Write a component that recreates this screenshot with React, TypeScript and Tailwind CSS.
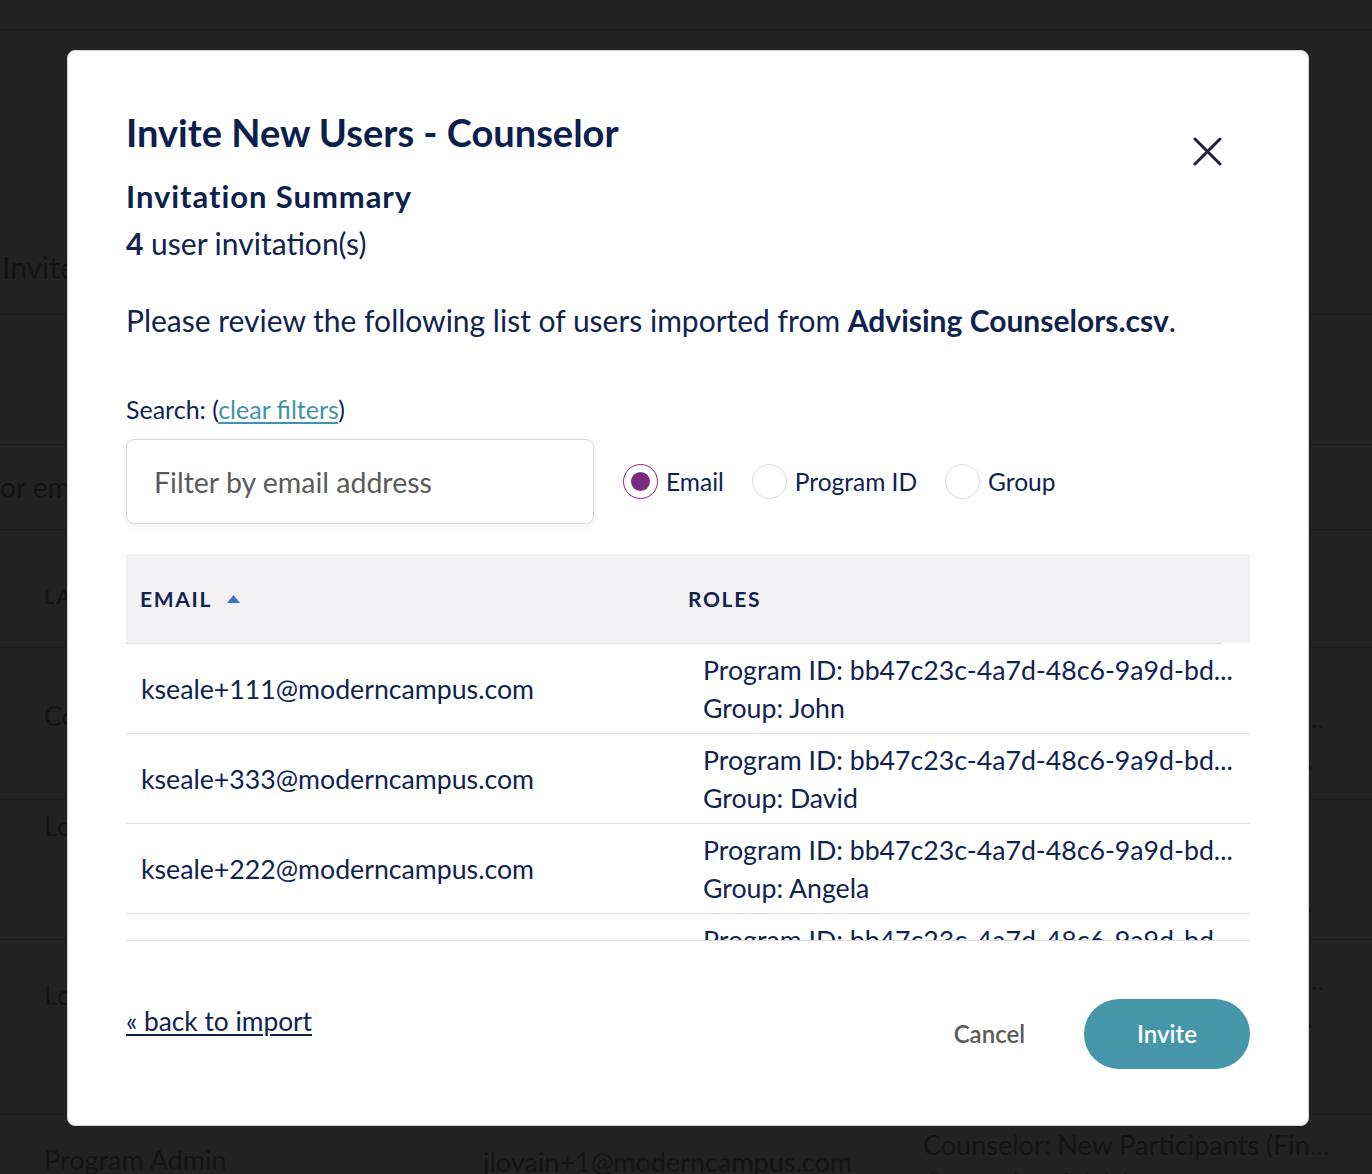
import { useState } from "react";

type Invitee = {
  email: string;
  programId: string;
  group: string;
};

const INVITEES: Invitee[] = [
  { email: "kseale+111@moderncampus.com", programId: "bb47c23c-4a7d-48c6-9a9d-bd...", group: "John" },
  { email: "kseale+333@moderncampus.com", programId: "bb47c23c-4a7d-48c6-9a9d-bd...", group: "David" },
  { email: "kseale+222@moderncampus.com", programId: "bb47c23c-4a7d-48c6-9a9d-bd...", group: "Angela" },
  { email: "kseale+444@moderncampus.com", programId: "bb47c23c-4a7d-48c6-9a9d-bd...", group: "Maria" },
];

const FILTERS = ["Email", "Program ID", "Group"] as const;

const LONG_ROLE = "Counselor: Advising Participants (Fall 2024 Cohort)";

// Page behind the dimmed overlay, barely visible
const BackdropPage = () => (
  <div className="text-[27px] leading-[42px] text-[#141414]">
    <div className="h-[30px] border-b border-[#1c1c1c]" />
    <div className="flex h-[285px] items-end border-b border-[#1c1c1c] pb-[26px] pl-[2px] text-[30px]">
      Invite Users
    </div>
    <div className="h-[130px] border-b border-[#1c1c1c]" />
    <div className="flex h-[85px] items-center border-b border-[#1c1c1c] text-[28px]">or email</div>
    <div className="flex h-[118px] items-end border-b border-[#1c1c1c] pb-[30px] pl-[44px] text-[20px] font-bold tracking-[0.1em]">
      LAST NAME
    </div>

    <div className="flex h-[152px] border-b border-[#1c1c1c] pl-[44px]">
      <span className="w-[879px] pt-[47px]">Counselor</span>
      <div className="flex w-[407px] flex-col pt-[49px]">
        <span className="truncate">{LONG_ROLE}</span>
        <span className="w-[396px] truncate">{LONG_ROLE}</span>
      </div>
    </div>

    <div className="flex h-[140px] border-b border-[#1c1c1c] pl-[44px] leading-[38px]">
      <span className="w-[879px] pt-[7px]">Lovain</span>
      <div className="flex w-[396px] flex-col pt-[7px]">
        <span>Counselor: Advising</span>
        <span>Counselor: New Students</span>
        <span className="truncate">{LONG_ROLE}</span>
      </div>
    </div>

    <div className="flex h-[175px] border-b border-[#1c1c1c] pl-[44px] leading-[38px]">
      <span className="w-[879px] pt-[36px]">Lovain</span>
      <div className="flex w-[407px] flex-col pt-[21px]">
        <span className="truncate">{LONG_ROLE}</span>
        <span className="w-[396px] truncate">{LONG_ROLE}</span>
      </div>
    </div>

    <div className="flex pl-[44px] leading-[38px]">
      <span className="w-[439px] pt-[26px]">Program Admin</span>
      <span className="w-[440px] pt-[28px]">jlovain+1@moderncampus.com</span>
      <div className="flex flex-col whitespace-nowrap pt-[11px]">
        <span>Counselor: New Participants (Fin...</span>
        <span>Counselor: Advising</span>
      </div>
    </div>
  </div>
);

const CloseIcon = () => (
  <svg className="block" width="29" height="29" viewBox="0 0 29 29" fill="none" stroke="#1b1f3d" strokeWidth={3} strokeLinecap="round">
    <path d="M2 2l25 25M27 2L2 27" />
  </svg>
);

const App = () => {
  const [filter, setFilter] = useState<(typeof FILTERS)[number]>("Email");

  return (
    <div className="relative h-[1174px] w-full overflow-hidden bg-[#222222] font-['Lato',sans-serif]">
      <BackdropPage />

      {/* Modal */}
      <div className="absolute inset-0">
        <div className="relative ml-[67px] mt-[50px] h-[1076px] w-[1242px] rounded-[8px] border border-[#d2d2d2] bg-white px-[58px] pt-[59px] text-[#10234f]">

          <button type="button" className="absolute right-[86px] top-[86px]">
            <CloseIcon />
          </button>

          {/* Header */}
          <h1 className="text-[38px] font-bold leading-[44px] text-[#0c1f4d]">Invite New Users - Counselor</h1>
          <h2 className="mt-[25px] text-[31px] font-bold leading-[34px] tracking-[0.03em] text-[#0c1f4d]">
            Invitation Summary
          </h2>
          <p className="mt-[12px] text-[30px] leading-[36px]">
            <span className="font-bold">4</span> user invitation(s)
          </p>

          <p className="mt-[42px] text-[30px] leading-[34px]">
            Please review the following list of users imported from{" "}
            <span className="font-bold">Advising Counselors.csv</span>.
          </p>

          {/* Search */}
          <p className="mt-[57px] text-[25px] leading-[30px]">
            Search: (<a href="#" className="text-[#3d95a7] underline underline-offset-[3px]">clear filters</a>)
          </p>
          <div className="mt-[15px] flex items-center">
            <input
              type="text"
              placeholder="Filter by email address"
              className="h-[85px] w-[468px] rounded-[8px] border border-[#d6d6d6] px-[27px] text-[28.5px] shadow-[0_3px_8px_rgba(0,0,0,0.06)] outline-none placeholder:text-[#5a5a5a]"
            />
            <div className="ml-[29px] flex items-center gap-[28px]">
              {FILTERS.map((f) => {
                const active = f === filter;
                return (
                  <button key={f} type="button" onClick={() => setFilter(f)} className="flex items-center gap-[8px]">
                    <span
                      className={`flex h-[35px] w-[35px] items-center justify-center rounded-full border ${
                        active ? "border-[1.5px] border-[#7a2b80]" : "border-[#dcdcdc]"
                      }`}
                    >
                      {active && <span className="h-[19px] w-[19px] rounded-full bg-[#7a2a7f]" />}
                    </span>
                    <span className="text-[24.5px] leading-[30px]">{f}</span>
                  </button>
                );
              })}
            </div>
          </div>

          {/* Table */}
          <div className="mt-[30px] h-[387px] overflow-hidden border-b border-[#dcdcdc]">
            <div className="flex h-[89px] items-center bg-[#f2f2f4] text-[21px] font-bold tracking-[0.08em]">
              <div className="flex w-[548px] items-center gap-[15px] pl-[14px]">
                EMAIL
                <svg width="13" height="8" viewBox="0 0 13 8">
                  <path d="M6.5 0L13 8H0z" fill="#3b6fd0" />
                </svg>
              </div>
              <div className="pl-[14px]">ROLES</div>
            </div>
            <div className="h-px w-[1096px] bg-[#dedede]" />
            {INVITEES.map((u) => (
              <div key={u.email} className="flex h-[90px] items-center border-b border-[#e0e0e0] text-[26.7px] leading-[38px]">
                <div className="w-[562px] pl-[15px]">{u.email}</div>
                <div className="flex flex-col pl-[15px]">
                  <span>Program ID: {u.programId}</span>
                  <span>Group: {u.group}</span>
                </div>
              </div>
            ))}
          </div>

          {/* Footer */}
          <div className="mt-[58px] flex items-start justify-between">
            <a href="#" className="mt-[7px] text-[26.3px] leading-[30px] underline underline-offset-[3px]">
              « back to import
            </a>
            <div className="flex items-center">
              <button type="button" className="mr-[59px] text-[24px] font-semibold text-[#5b5b5b]">
                Cancel
              </button>
              <button
                type="button"
                className="h-[70px] w-[166px] rounded-full bg-[#4596a9] text-[24px] font-semibold text-white"
              >
                Invite
              </button>
            </div>
          </div>

        </div>
      </div>
    </div>
  );
};

export default App;
